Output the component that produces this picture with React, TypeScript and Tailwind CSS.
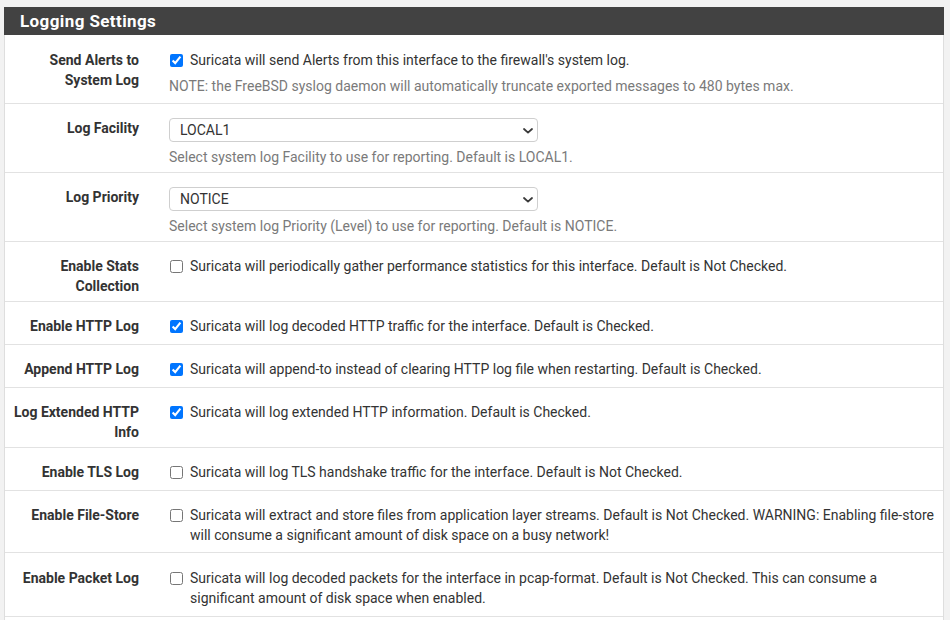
import React from "react";

type Row = {
  label: string[];
  h: string;
  pt: string;
  kind: "check" | "select";
  checked?: boolean;
  text?: string;
  note?: string;
  value?: string;
};

const rows: Row[] = [
  {
    label: ["Send Alerts to", "System Log"],
    h: "h-[69px]",
    pt: "pt-[15px]",
    kind: "check",
    checked: true,
    text: "Suricata will send Alerts from this interface to the firewall's system log.",
    note: "NOTE: the FreeBSD syslog daemon will automatically truncate exported messages to 480 bytes max.",
  },
  {
    label: ["Log Facility"],
    h: "h-[69px]",
    pt: "pt-[14px]",
    kind: "select",
    value: "LOCAL1",
    note: "Select system log Facility to use for reporting. Default is LOCAL1.",
  },
  {
    label: ["Log Priority"],
    h: "h-[69px]",
    pt: "pt-[14px]",
    kind: "select",
    value: "NOTICE",
    note: "Select system log Priority (Level) to use for reporting. Default is NOTICE.",
  },
  {
    label: ["Enable Stats", "Collection"],
    h: "h-[60px]",
    pt: "pt-[14px]",
    kind: "check",
    checked: false,
    text: "Suricata will periodically gather performance statistics for this interface. Default is Not Checked.",
  },
  {
    label: ["Enable HTTP Log"],
    h: "h-[43px]",
    pt: "pt-[14px]",
    kind: "check",
    checked: true,
    text: "Suricata will log decoded HTTP traffic for the interface. Default is Checked.",
  },
  {
    label: ["Append HTTP Log"],
    h: "h-[43px]",
    pt: "pt-[14px]",
    kind: "check",
    checked: true,
    text: "Suricata will append-to instead of clearing HTTP log file when restarting. Default is Checked.",
  },
  {
    label: ["Log Extended HTTP", "Info"],
    h: "h-[60px]",
    pt: "pt-[14px]",
    kind: "check",
    checked: true,
    text: "Suricata will log extended HTTP information. Default is Checked.",
  },
  {
    label: ["Enable TLS Log"],
    h: "h-[43px]",
    pt: "pt-[14px]",
    kind: "check",
    checked: false,
    text: "Suricata will log TLS handshake traffic for the interface. Default is Not Checked.",
  },
  {
    label: ["Enable File-Store"],
    h: "h-[62px]",
    pt: "pt-[14px]",
    kind: "check",
    checked: false,
    text: "Suricata will extract and store files from application layer streams. Default is Not Checked. WARNING: Enabling file-store will consume a significant amount of disk space on a busy network!",
  },
  {
    label: ["Enable Packet Log"],
    h: "h-[64px]",
    pt: "pt-[15px]",
    kind: "check",
    checked: false,
    text: "Suricata will log decoded packets for the interface in pcap-format. Default is Not Checked. This can consume a significant amount of disk space when enabled.",
  },
];

function Chevron() {
  return (
    <svg width="10" height="6" viewBox="0 0 10 6" className="absolute right-[4px] top-[9px]">
      <path d="M1 1 L5 4.6 L9 1" fill="none" stroke="#3a3a3a" strokeWidth="1.8" strokeLinecap="round" strokeLinejoin="round" />
    </svg>
  );
}

function RowView({ r }: { r: Row }) {
  return (
    <div className={`flex border-b border-[#e2e2e2] ${r.h} ${r.pt}`}>
      <div className="w-[164px] shrink-0 pr-[30px] text-right font-bold text-[14px] leading-[20px] text-[#333333]">
        {r.label.map((l, i) => (
          <div key={i}>{l}</div>
        ))}
      </div>
      <div className="flex-1 pr-[5px] text-[14px] leading-[20px] text-[#333333]">
        {r.kind === "check" ? (
          <label className="flex items-start">
            <input
              type="checkbox"
              defaultChecked={r.checked}
              className="ml-[1px] mt-[4px] h-[13px] w-[13px] shrink-0"
            />
            <span className="ml-[7px]">{r.text}</span>
          </label>
        ) : (
          <div className="relative w-[369px] h-[24px] rounded-[4px] border border-[#cfcfcf] bg-white pl-[10px] leading-[22px] text-[#333333]">
            {r.value}
            <Chevron />
          </div>
        )}
        {r.note && (
          <div className={`${r.kind === "check" ? "mt-[6px]" : "mt-[5px]"} text-[#7a7a7a]`}>{r.note}</div>
        )}
      </div>
    </div>
  );
}

export default function App() {
  return (
    <div
      className="min-h-screen bg-[#f2f2f2] pt-[7px] pl-[4px] pr-[6px]"
      style={{ fontFamily: "Roboto, 'Liberation Sans', sans-serif" }}
    >
      <div className="bg-white">
        <div className="h-[28px] bg-[#424242] pl-[16px] flex items-center">
          <span className="text-white font-bold text-[17px] tracking-[0.4px] leading-none">Logging Settings</span>
        </div>
        <div className="border-x border-[#dedede]">
          {rows.map((r, i) => (
            <RowView key={i} r={r} />
          ))}
          <div className="h-[20px]" />
        </div>
      </div>
    </div>
  );
}
